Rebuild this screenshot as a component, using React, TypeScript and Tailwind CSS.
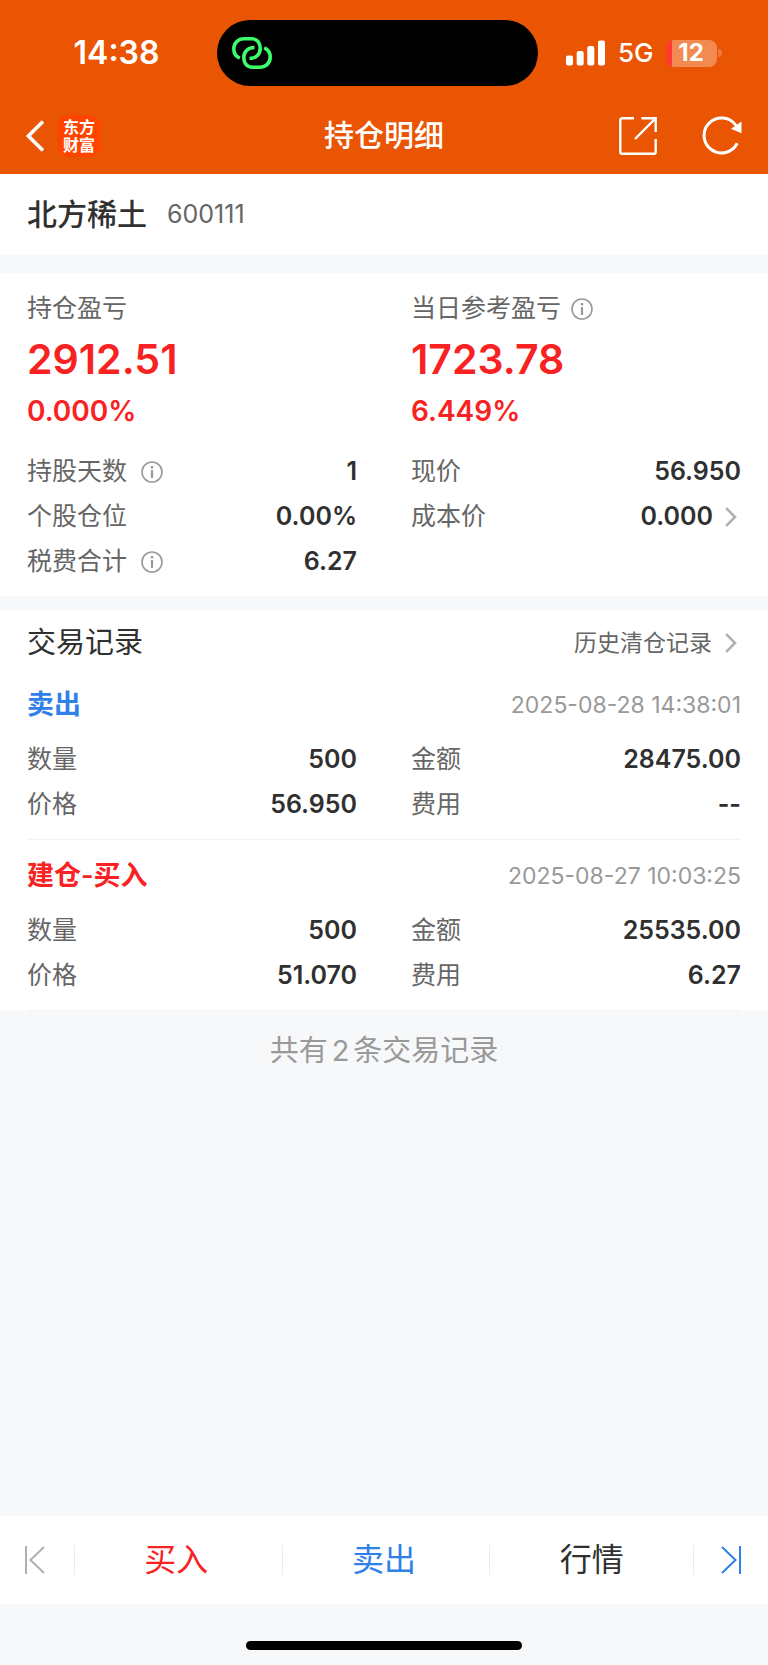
import React from 'react';

interface Item {
  label: string;
  value: string;
  info?: boolean;
  more?: boolean;
}

interface TradeRecord {
  title: string;
  color: string;
  time: string;
  left: Item[];
  right: Item[];
}

const leftStats: Item[] = [
  { label: '持股天数', value: '1', info: true },
  { label: '个股仓位', value: '0.00%' },
  { label: '税费合计', value: '6.27', info: true },
];

const rightStats: Item[] = [
  { label: '现价', value: '56.950' },
  { label: '成本价', value: '0.000', more: true },
];

const records: TradeRecord[] = [
  {
    title: '卖出',
    color: 'text-[#2f80e8]',
    time: '2025-08-28 14:38:01',
    left: [
      { label: '数量', value: '500' },
      { label: '价格', value: '56.950' },
    ],
    right: [
      { label: '金额', value: '28475.00' },
      { label: '费用', value: '--' },
    ],
  },
  {
    title: '建仓-买入',
    color: 'text-[#f82222]',
    time: '2025-08-27 10:03:25',
    left: [
      { label: '数量', value: '500' },
      { label: '价格', value: '51.070' },
    ],
    right: [
      { label: '金额', value: '25535.00' },
      { label: '费用', value: '6.27' },
    ],
  },
];

const ChevronRight: React.FC = () => (
  <svg width="12" height="20" viewBox="0 0 12 20" fill="none" stroke="#b0b0b0" strokeWidth="2.6" aria-hidden="true">
    <path d="M1.2 1.2 10 10l-8.8 8.8" />
  </svg>
);

const InfoButton: React.FC<{ label: string }> = ({ label }) => (
  <button type="button" aria-label={`${label}说明`} className="shrink-0">
    <svg width="22" height="22" viewBox="0 0 22 22" fill="none" stroke="#999999" aria-hidden="true">
      <circle cx="11" cy="11" r="10" strokeWidth="1.6" />
      <path d="M11 9v8" strokeWidth="2.2" />
      <path d="M11 5v2.4" strokeWidth="2.4" />
    </svg>
  </button>
);

const StatusBar: React.FC = () => (
  <div className="grid h-[98px] grid-cols-[217fr_321fr_230fr] items-center pt-2">
    <span className="pl-4 text-center text-[32px] leading-9 font-semibold">14:38</span>
    <div className="flex h-[66px] items-center rounded-full bg-black pl-[15px]">
      <svg width="40" height="32" viewBox="0 0 40 32" fill="none" stroke="#3dfd6a" strokeWidth="3.6" aria-hidden="true">
        <path d="M7.8 21.2C3.8 19.4 1.8 16 1.8 12 1.8 6 6 1.8 12 1.8h7.5c6 0 8.7 4.200 8.700 9.700 0 6-4.400 10-10.700 10" />
        <path d="M32.200 10.800c4 1.800 6 5.200 6 9.200 0 6-4.200 10.200-10.200 10.200h-7.500c-6 0-8.700-4.200-8.700-9.700 0-6 4.400-10 10.700-10" />
      </svg>
    </div>
    <div className="flex items-center pl-7">
      <svg width="40" height="26" viewBox="0 0 40 26" fill="white" aria-hidden="true">
        <rect x="0" y="15.5" width="7" height="10" rx="2" />
        <rect x="10.7" y="11" width="7" height="14.5" rx="2" />
        <rect x="21.3" y="6" width="7" height="19.5" rx="2" />
        <rect x="32" y="0.5" width="7" height="25" rx="2" />
      </svg>
      <span className="ml-3 text-[26px] leading-8 font-medium">5G</span>
      <div className="ml-3 flex h-[27px] w-[51px] items-center justify-center overflow-hidden rounded-lg bg-linear-to-r from-[#ff3b30] from-12% to-[#f28a52] to-12% text-2xl leading-6 font-bold">
        12
      </div>
      <span className="ml-px h-2 w-1 rounded-r-full bg-[#f07a3c]" />
    </div>
  </div>
);

const NavBar: React.FC = () => (
  <div className="grid h-[76px] grid-cols-[1fr_auto_1fr] items-center px-[26px]">
    <div className="flex items-center gap-[14px]">
      <button type="button" aria-label="返回">
        <svg width="18" height="32" viewBox="0 0 18 32" fill="none" stroke="white" strokeWidth="3.6" aria-hidden="true">
          <path d="M17 1.5 2.4 16 17 30.5" />
        </svg>
      </button>
      <div className="flex h-[42px] w-[42px] flex-col items-center justify-center rounded-[10px] bg-[#ff4400] text-base leading-[18px] font-bold">
        <span>东方</span>
        <span>财富</span>
      </div>
    </div>
    <h1 className="pb-0.5 text-[30px] leading-10 font-medium">持仓明细</h1>
    <div className="flex items-center justify-end gap-[45px]">
      <button type="button" aria-label="分享">
        <svg width="38" height="38" viewBox="0 0 38 38" fill="none" stroke="white" strokeWidth="2.4" aria-hidden="true">
          <path d="M15 1.300H3a1.700 1.700 0 0 0-1.700 1.700v32A1.700 1.700 0 0 0 3 36.700h32a1.700 1.700 0 0 0 1.700-1.700V22" />
          <path d="M22.5 1.300h14.200V15M36.300 1.700 16 22" />
        </svg>
      </button>
      <button type="button" aria-label="刷新">
        <svg width="40" height="40" viewBox="0 0 40 40" fill="none" aria-hidden="true">
          <path d="M35.2 27.3A17.5 17.5 0 1 1 34 9.5" stroke="white" strokeWidth="3" />
          <path d="M39.5 5.500v11.700l-10.500-4.400z" fill="white" />
        </svg>
      </button>
    </div>
  </div>
);

const ItemRow: React.FC<{ item: Item }> = ({ item }) => (
  <div className="flex h-[45px] items-center justify-between">
    <dt className="flex items-center gap-[14px] text-[25px] text-[#666666]">
      {item.label}
      {item.info && <InfoButton label={item.label} />}
    </dt>
    <dd className="flex items-center text-[25px] font-semibold text-[#303030]">
      {item.value}
      {item.more && (
        <button type="button" aria-label={`${item.label}详情`} className="mr-1 ml-3">
          <ChevronRight />
        </button>
      )}
    </dd>
  </div>
);

const ItemColumns: React.FC<{ left: Item[]; right: Item[] }> = ({ left, right }) => (
  <div className="grid grid-cols-2 gap-[54px]">
    {[left, right].map((items, index) => (
      <dl key={index}>
        {items.map((item) => (
          <ItemRow key={item.label} item={item} />
        ))}
      </dl>
    ))}
  </div>
);

const Profit: React.FC<{ label: string; amount: string; percent: string; info?: boolean }> = ({
  label,
  amount,
  percent,
  info,
}) => (
  <div>
    <div className="flex h-9 items-center gap-[10px] text-[25px] text-[#666666]">
      {label}
      {info && <InfoButton label={label} />}
    </div>
    <p className="mt-1 text-[41px] leading-[56px] font-semibold">{amount}</p>
    <p className="mt-1 text-[28px] leading-10 font-semibold">{percent}</p>
  </div>
);

const App: React.FC = () => {
  return (
    <div className="flex min-h-screen flex-col bg-[#f6f8fa] font-['Inter','Noto_Sans_CJK_SC',sans-serif]">
      <header className="bg-[#ea5504] text-white">
        <StatusBar />
        <NavBar />
      </header>

      <main>
        <section className="flex h-[81px] items-center gap-5 bg-white px-[27px]">
          <h2 className="pb-0.5 text-[30px] leading-10 font-medium text-[#303030]">北方稀土</h2>
          <span className="text-[25px] text-[#666666]">600111</span>
        </section>

        <section className="mt-[18px] bg-white px-[27px] pt-[18px] pb-3">
          <div className="grid grid-cols-2 gap-[54px] text-[#f82222]">
            <Profit label="持仓盈亏" amount="2912.51" percent="0.000%" />
            <Profit label="当日参考盈亏" amount="1723.78" percent="6.449%" info />
          </div>
          <div className="mt-[18px]">
            <ItemColumns left={leftStats} right={rightStats} />
          </div>
        </section>

        <section className="mt-[14px] bg-white">
          <div className="flex h-[59px] items-center justify-between px-[27px] pt-[7px]">
            <h2 className="text-[29px] text-[#303030]">交易记录</h2>
            <a href="#history" className="mr-1 flex items-center gap-[13px] text-[23px] text-[#666666]">
              历史清仓记录
              <ChevronRight />
            </a>
          </div>
          {records.map((record) => (
            <article key={record.time} className="mx-[27px] border-b border-[#f2f3f5] pb-3">
              <div className="flex h-[68px] items-center justify-between pt-1">
                <h3 className={`text-[27px] font-semibold ${record.color}`}>{record.title}</h3>
                <time className="text-[23px] text-[#999999]">{record.time}</time>
              </div>
              <ItemColumns left={record.left} right={record.right} />
            </article>
          ))}
        </section>

        <p className="py-5 text-center text-[29px] leading-10 text-[#999999]">
          共有<span className="mx-1">2</span>条交易记录
        </p>
      </main>

      <nav className="mt-auto flex h-[88px] items-center bg-white text-[32px]">
        <button type="button" aria-label="上一只" className="flex w-[74px] justify-center pr-1">
          <svg width="20" height="28" viewBox="0 0 20 28" fill="none" stroke="#b0b0b0" strokeWidth="2" aria-hidden="true">
            <path d="M1 0v28M19 1 5.5 14 19 27" />
          </svg>
        </button>
        <button type="button" className="h-[30px] flex-1 border-l border-[#ececec] pr-1 leading-[30px] text-[#f82222]">买入</button>
        <button type="button" className="h-[30px] flex-1 border-l border-[#ececec] pr-1 leading-[30px] text-[#2f80e8]">卖出</button>
        <button type="button" className="h-[30px] flex-1 border-x border-[#ececec] leading-[30px] text-[#303030]">行情</button>
        <button type="button" aria-label="下一只" className="flex w-[74px] justify-center">
          <svg width="20" height="28" viewBox="0 0 20 28" fill="none" stroke="#2f80e8" strokeWidth="2" aria-hidden="true">
            <path d="M19 0v28M1 1l13.5 13L1 27" />
          </svg>
        </button>
      </nav>
      <div className="flex h-[61px] items-end justify-center pb-[15px]">
        <span className="h-[9px] w-[36%] rounded-full bg-black" />
      </div>
    </div>
  );
};

export default App;
